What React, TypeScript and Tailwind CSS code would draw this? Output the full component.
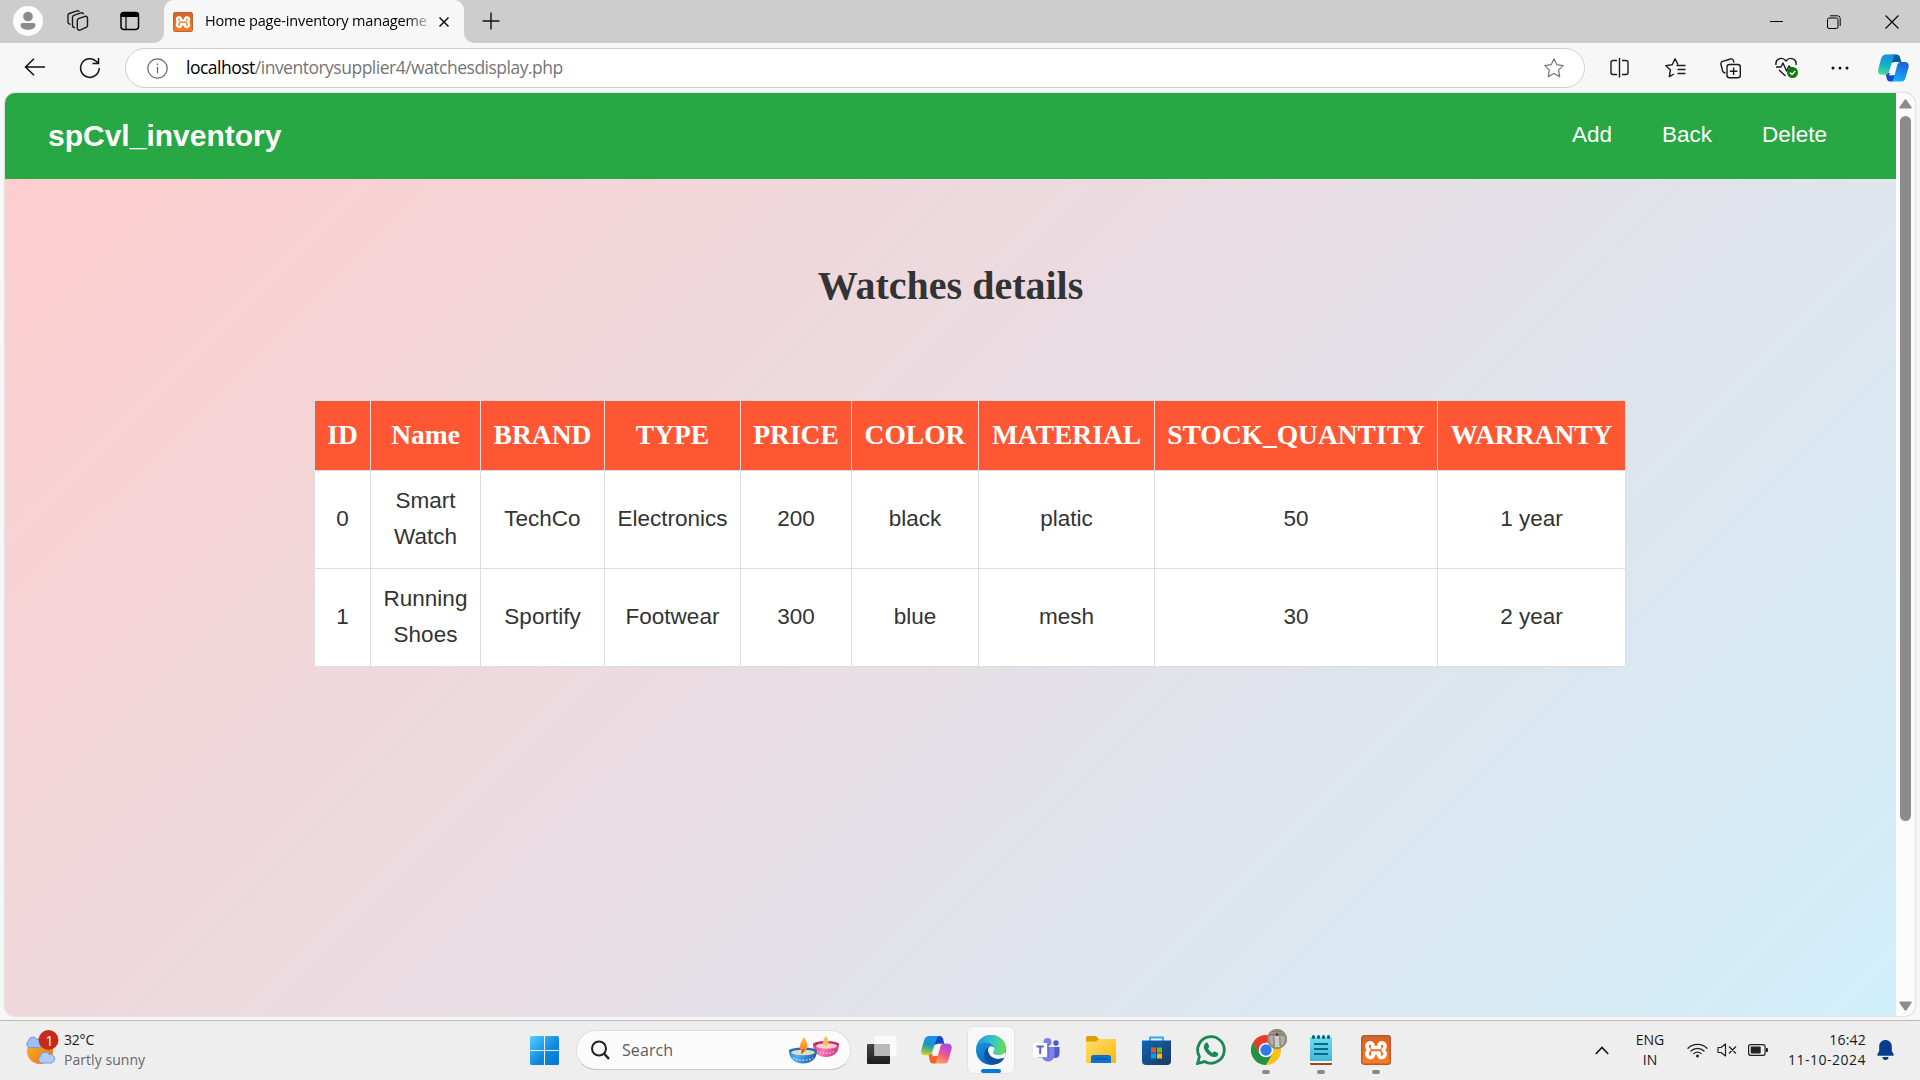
import React from "react";

function Person() {
  return (
    <svg width="30" height="30" viewBox="0 0 30 30">
      <circle cx="15" cy="15" r="15" fill="#fcfcfc" />
      <circle cx="15" cy="10.500" r="4.800" fill="#8b8b8b" />
      <path d="M9.500 17h11a2 2 0 0 1 2 2c0 3.200-3.500 4.800-7.500 4.800S7.500 22.200 7.500 19a2 2 0 0 1 2-2Z" fill="#8b8b8b" />
    </svg>
  );
}

function Workspaces() {
  return (
    <svg width="22" height="22" viewBox="0 0 22 22" fill="none" stroke="#1a1a1a" strokeWidth="1.400" strokeLinejoin="round" strokeLinecap="round">
      <path d="M11.500 8.700 18 6.300a2 2 0 0 1 2.500 1.900v7.300a2 2 0 0 1-1.300 1.900l-6.200 2.700a2 2 0 0 1-2.700-1.800V10.500a2 2 0 0 1 1.200-1.800Z" />
      <path d="M7.500 17.500a2 2 0 0 1-2-2V7.300a2 2 0 0 1 1.300-1.900l7.200-2.500a2 2 0 0 1 2.300.8" />
      <path d="M3 14.200a2 2 0 0 1-2-2V5.300A2 2 0 0 1 2.300 3.500L10 .9a2 2 0 0 1 2 .4" />
    </svg>
  );
}

function TabActions() {
  return (
    <svg width="20" height="20" viewBox="0 0 20 20">
      <rect x="1" y="1.500" width="17.500" height="17" rx="3" fill="none" stroke="#000" strokeWidth="1.500" />
      <path d="M.5 6V4a3 3 0 0 1 3-3h12.500a3 3 0 0 1 3 3v2Z" fill="#000" />
      <path d="M6 6v12" stroke="#000" strokeWidth="1.200" />
    </svg>
  );
}

function Xampp({ size }: { size: number }) {
  return (
    <svg width={size} height={size} viewBox="0 0 30 30">
      <defs>
        <linearGradient id="xg" x1="0" y1="0" x2="0" y2="1">
          <stop offset="0" stopColor="#c96a3b" />
          <stop offset="0.2" stopColor="#e5641a" />
          <stop offset="1" stopColor="#fb7d25" />
        </linearGradient>
      </defs>
      <rect x="0.700" y="0.700" width="28.600" height="28.600" rx="2.500" fill="url(#xg)" stroke="#b9592b" strokeWidth="1.400" />
      <path d="M11.500 12.500 11.800 9.500C10 6.800 6 7.800 6 11c0 2 .8 3 2 4-1.800 1.200-2.200 3-2 4.500.5 3.500 5 4 6.300 1l-.5-2.500h6.400l-.5 2.500c1.300 3 5.800 2.500 6.300-1 .2-1.500-.2-3.300-2-4.500 1.200-1 2-2 2-4 0-3.200-4-4.200-5.800-1.500l.3 3Z" fill="none" stroke="#fff" strokeWidth="3.600" strokeLinecap="round" strokeLinejoin="round" />
    </svg>
  );
}

function CopilotEdge() {
  return (
    <svg width="31" height="28" viewBox="0 0 31 28">
      <defs>
        <linearGradient id="ce1" x1="0.400" y1="0" x2="0.200" y2="1"><stop stopColor="#1a8fe0" /><stop offset="0.500" stopColor="#12b0c8" /><stop offset="1" stopColor="#56dc8c" /></linearGradient>
        <linearGradient id="ce2" x1="0.500" y1="0" x2="0.200" y2="1"><stop stopColor="#1b62d8" /><stop offset="1" stopColor="#17b4fb" /></linearGradient>
      </defs>
      <path d="M13 .5h5.500c2 0 3 1 3.600 3l1.400 5H12.500Z" fill="#0a5b9c" />
      <path d="M7.500 19H17.500l-2 8.500H12c-2 0-2.700-1-3.300-3.200Z" fill="#1745cf" />
      <path d="M17 8h5.500l-2 4-3 9-6.500.500 3.600-10.500c.5-2 1.200-3 2.400-3Z" fill="#f4fbff" />
      <path d="M8 .5h10.500c-2 0-2.700 2-3.400 4.500l-3.800 12c-.7 2.500-2 3.700-4 3.700H3.500C.5 20.700-.5 18 .3 15L3 5C3.700 2 5.700.5 8 .5Z" fill="url(#ce1)" />
      <path d="M22.500 8H27c3 0 4.200 2.500 3.500 5.500L27.500 24c-.8 2.500-2 3.500-4 3.500H12.500c2 0 2.700-1.500 3.400-4L19.300 11c.6-2 1.500-3 3.200-3Z" fill="url(#ce2)" />
    </svg>
  );
}

function CopilotColor() {
  return (
    <svg width="31" height="28" viewBox="0 0 31 28">
      <defs>
        <linearGradient id="cc1" x1="0.300" y1="0" x2="0.100" y2="1"><stop stopColor="#1892f2" /><stop offset="0.400" stopColor="#1b95c4" /><stop offset="0.750" stopColor="#74c150" /><stop offset="1" stopColor="#ecd52c" /></linearGradient>
        <linearGradient id="cc2" x1="0.700" y1="0" x2="0.200" y2="1"><stop stopColor="#a548e8" /><stop offset="0.500" stopColor="#f0588e" /><stop offset="1" stopColor="#ffad55" /></linearGradient>
      </defs>
      <path d="M13 0h5.500c2 0 3 1 3.600 3l1.400 5.500H12.500Z" fill="#1b45c5" />
      <path d="M7.500 18H17.500l-2 9.500H12c-2 0-2.700-1-3.300-3.200Z" fill="#f8632c" />
      <path d="M17 7.700h5.500l-2 4-3 8-6.500.500 3.600-9.500c.5-2 1.200-3 2.400-3Z" fill="#fbf6f8" />
      <path d="M8 0h10.500c-2 0-2.700 2-3.400 4.500l-3.800 11c-.7 2.500-2 3.800-4 3.800H3.500C.5 19.300-.5 17 .3 14L3 4.500C3.700 1.500 5.700 0 8 0Z" fill="url(#cc1)" />
      <path d="M22.500 7.700H27c3 0 4.200 2.500 3.500 5.500L27.500 24c-.8 2.500-2 3.500-4 3.500H12.500c2 0 2.700-1.500 3.400-4L19.300 10.700c.6-2 1.500-3 3.200-3Z" fill="url(#cc2)" />
    </svg>
  );
}

function Edge() {
  return (
    <svg width="30" height="30" viewBox="0 0 30 30">
      <defs>
        <linearGradient id="eg1" x1="0" y1="0.300" x2="1" y2="0.500"><stop stopColor="#2097dc" /><stop offset="0.500" stopColor="#35c3d0" /><stop offset="1" stopColor="#67e04c" /></linearGradient>
        <linearGradient id="eg2" x1="0" y1="0" x2="0.400" y2="1"><stop stopColor="#1b9de2" /><stop offset="1" stopColor="#0869c8" /></linearGradient>
      </defs>
      <circle cx="15" cy="15" r="15" fill="url(#eg2)" />
      <path d="M.3 12C1.500 4.500 8 0 15 0c9 0 15 6.500 15 13 0 4.500-3.500 7-7.500 7-3.500 0-5.500-1.200-5.500-2.300 0-.8 1.500-1.300 1.500-3.700 0-3.500-4-6.500-9-6.500C5 7.500 1.800 9.500.3 12Z" fill="url(#eg1)" />
      <path d="M12.500 12C9 14 8 17.500 8 20c0 5 4 9.500 9 9.800 5-.3 9-3.300 10.800-6.300.2-.6-.2-.9-.8-.6-7 3.500-15-.5-15-7.200 0-1.500.3-2.700.5-3.700Z" fill="#12519b" />
      <path d="M18.500 13.700c0 2.400-1.500 3.200-1.500 4 0 1.100 2 2.300 5.500 2.300 2.700 0 5-1 7-3.200 .3 2.500-.8 4.700-1.700 6.200-6.800 3.200-15.300-.8-15.800-6.700-.2-3 1-4.800 3-5 2-.1 3.500 1 3.500 2.400Z" fill="#f8f8f8" />
      <path d="M12.300 16.500c.8 5.500 7.200 8.500 13 7 1.300-.4 2.300-.8 2.700-.5.4.5-1.500 3.200-4.500 4.900C14 30 9 22 12.300 16.500Z" fill="#12519b" />
    </svg>
  );
}

function Teams() {
  return (
    <svg width="27" height="24" viewBox="0 0 27 24">
      <circle cx="14.500" cy="4" r="4" fill="#7b83eb" />
      <circle cx="23" cy="5" r="2.700" fill="#5059c9" />
      <path d="M16 9h10.500v6.500c0 3-2 4.500-4.500 4.500s-4-2-4-4Z" fill="#5059c9" />
      <path d="M8 9h13.500v8c0 4-3 6.500-6.500 6.500S9 21 8 17Z" fill="#7b83eb" />
      <path d="M14 5.500h1.500v14H5l-1-1h10Z" fill="#4b53bc" />
      <rect y="5" width="14.300" height="14.300" fill="#fff" />
      <path d="M3.500 8.500h7.300M7.200 8.500V16" stroke="#5a62c3" strokeWidth="2" />
    </svg>
  );
}

function Folder() {
  return (
    <svg width="30" height="28" viewBox="0 0 30 28">
      <defs><linearGradient id="fg" x1="0" y1="0" x2="1" y2="1"><stop stopColor="#ffdf70" /><stop offset="1" stopColor="#fbb80e" /></linearGradient></defs>
      <path d="M0 1.500A1.500 1.500 0 0 1 1.500 0H10l3 3h17v4H0Z" fill="#dc9f08" />
      <path d="M0 5.500h10l3.500-2.500h15A1.500 1.500 0 0 1 30 4.500V27H1.500A1.500 1.500 0 0 1 0 25.500Z" fill="url(#fg)" />
      <path d="M5 27v-5.500a2.500 2.500 0 0 1 2.500-2.500h15a2.500 2.500 0 0 1 2.500 2.500V27Z" fill="#0d72cf" />
      <path d="M9 23h12" stroke="#0a4d93" strokeWidth="1.200" strokeLinecap="round" />
    </svg>
  );
}

function Store() {
  return (
    <svg width="29" height="29" viewBox="0 0 29 29">
      <defs><linearGradient id="sg" x1="0" y1="0" x2="1" y2="1"><stop stopColor="#0967b8" /><stop offset="1" stopColor="#21375e" /></linearGradient></defs>
      <path d="M8 5V1.500h13V5" fill="none" stroke="#22b0ee" strokeWidth="1.800" />
      <path d="M0 4.500h29V25a4 4 0 0 1-4 4H4a4 4 0 0 1-4-4Z" fill="url(#sg)" />
      <rect x="9" y="11.500" width="5" height="5" fill="#f25022" />
      <rect x="15" y="11.500" width="5" height="5" fill="#7fba00" />
      <rect x="9" y="17.500" width="5" height="5" fill="#00a4ef" />
      <rect x="15" y="17.500" width="5" height="5" fill="#ffb900" />
    </svg>
  );
}

function WhatsApp() {
  return (
    <svg width="30" height="30" viewBox="0 0 30 30">
      <path d="M1.600 28.400 3.400 21.500A13.300 13.300 0 1 1 8.600 26.600Z" fill="none" stroke="#1a8754" strokeWidth="2.800" />
      <path d="M9.700 8c.6-.6 1.800-.5 2.200.3l1.300 3c.2.600-.2 1.200-1.100 2.300 1 2 2.400 3.400 4.500 4.300 1.200-1.300 1.500-1.700 2.200-1.400l3 1.500c.6.300.5 1 .2 2-.5 1.400-2.300 2.200-3.800 2.100C12.500 21.500 8 15.500 7.800 12c0-1.700.8-3.200 1.900-4Z" fill="#1a8754" />
    </svg>
  );
}

function Chrome() {
  return (
    <svg width="37" height="37" viewBox="0 0 37 37">
      <circle cx="15" cy="21" r="15" fill="#fbc116" />
      <path d="M2 13.500A15 15 0 0 1 28 13.500H15L8.500 25Z" fill="#e33b2e" />
      <path d="M2 13.500A15 15 0 0 0 15 36l6.500-11.300L8.500 24.700Z" fill="#229342" />
      <circle cx="15" cy="21" r="7.300" fill="#fff" />
      <circle cx="15" cy="21" r="5.700" fill="#327bec" />
      <circle cx="26" cy="10" r="10" fill="#9b948b" />
      <path d="M19 5.500h14M21 2.500h10" stroke="#857c70" strokeWidth="1.200" />
      <path d="M18.500 8l3-1 1 9-2.500-1Zm11-1 4 1-1 7-3 1Z" fill="#b9b2a7" />
      <path d="M23.500 7h4.500l1 11h-5Z" fill="#cfcbcb" />
      <circle cx="26" cy="5.500" r="1.600" fill="#5b4a3c" />
      <path d="M23 10v7M29 9v8" stroke="#85817a" strokeWidth="1" />
      <circle cx="26" cy="10" r="9.500" fill="none" stroke="#8a8379" strokeWidth="1" />
    </svg>
  );
}

function Notepad() {
  return (
    <svg width="22" height="30" viewBox="0 0 22 30">
      <defs><linearGradient id="ng" x1="0" y1="0" x2="0" y2="1"><stop stopColor="#6fdcee" /><stop offset="1" stopColor="#42b6d6" /></linearGradient></defs>
      <rect y="26" width="22" height="4" rx="1" fill="#a1480c" />
      <rect y="25" width="22" height="3" fill="#f4f2f1" />
      <rect y="2" width="22" height="24" rx="1" fill="url(#ng)" />
      <path d="M4 9h14M4 14h14M4 19h14" stroke="#08678a" strokeWidth="1.800" />
      <path d="M3.500 1.500v1M8.500 1.500v1M13.500 1.500v1M18.500 1.500v1" stroke="#0b5f7d" strokeWidth="3" strokeLinecap="round" />
    </svg>
  );
}

function Diyas() {
  return (
    <svg width="50" height="28" viewBox="0 0 50 28">
      <defs>
        <linearGradient id="db" x1="0" y1="0" x2="1" y2="0.300"><stop stopColor="#2a80c8" /><stop offset="0.400" stopColor="#4fb0f2" /><stop offset="1" stopColor="#1f62a5" /></linearGradient>
        <linearGradient id="dp" x1="0" y1="0" x2="1" y2="0.300"><stop stopColor="#d83a84" /><stop offset="0.500" stopColor="#ff7ab6" /><stop offset="1" stopColor="#d03784" /></linearGradient>
        <linearGradient id="df" x1="0" y1="0" x2="0" y2="1"><stop stopColor="#ffc24a" /><stop offset="1" stopColor="#f4781c" /></linearGradient>
      </defs>
      <path d="M24 8c0 8 5 13 13 13s13-5 13-13Z" fill="url(#dp)" />
      <ellipse cx="37" cy="8" rx="13" ry="3" fill="#c92573" />
      <ellipse cx="37.500" cy="10" rx="10.500" ry="2.800" fill="#f5d3c6" />
      <path d="M36.500 0c4 4 4 7 1 10-5-1.500-4-5.500-1-10Z" fill="#f8bd55" />
      <path d="M27.500 15c5 3 15 3 19 0" fill="none" stroke="#ffd0e6" strokeWidth="1.200" strokeDasharray="1.500 1.800" />
      <path d="M0 14.500c0 7.500 5 13 14 13s14-5.500 14-13Z" fill="url(#db)" />
      <ellipse cx="14" cy="14.500" rx="14" ry="3" fill="#1f6fb0" />
      <ellipse cx="14" cy="16.500" rx="12" ry="2.800" fill="#e3ddc0" />
      <path d="M15 1c4 6 5 11 0 15.500-6-3-5-8 0-15.500Z" fill="url(#df)" />
      <path d="M14.500 13.500 12.500 17.500" stroke="#9a4218" strokeWidth="1.300" />
      <path d="M4 22c5 3 15 3 20 0" fill="none" stroke="#bfe3ff" strokeWidth="1.300" strokeDasharray="1.500 1.800" />
    </svg>
  );
}

function TabStrip() {
  return (
    <div className="flex h-[43px] shrink-0 items-stretch bg-[#cdcdcd]">
      <div className="flex w-[164px] items-center pb-px">
        <div className="ml-[13px]"><Person /></div>
        <div className="ml-[24px]"><Workspaces /></div>
        <div className="ml-[31px]"><TabActions /></div>
      </div>
      <div className="relative flex w-[300px] items-center rounded-t-[10px] bg-[#f7f7f7] pl-[9px]">
        <svg className="absolute bottom-0 -left-[10px]" width="10" height="10"><path d="M10 0v10H0A10 10 0 0 0 10 0Z" fill="#f7f7f7" /></svg>
        <svg className="absolute -right-[10px] bottom-0" width="10" height="10"><path d="M0 0v10h10A10 10 0 0 1 0 0Z" fill="#f7f7f7" /></svg>
        <Xampp size={20} />
        <span className="mb-[2px] ml-[12px] w-[224px] overflow-hidden bg-linear-to-r from-black from-90% to-black/20 bg-clip-text text-[14.5px] tracking-[-0.15px] whitespace-nowrap text-transparent">Home page-inventory manageme</span>
        <svg className="ml-[9px]" width="12" height="12"><path d="M1.500 1.500l9 9M10.500 1.500l-9 9" stroke="#111" strokeWidth="1.500" /></svg>
      </div>
      <div className="flex items-center pb-[2px] pl-[18px]">
        <svg width="18" height="18"><path d="M9 .5v17M.5 9h17" stroke="#111" strokeWidth="1.400" /></svg>
      </div>
      <div className="ml-auto flex items-center gap-[44px] pr-[21px]">
        <svg width="13" height="13"><path d="M0 6.500h13" stroke="#000" /></svg>
        <svg width="14" height="14" fill="none" stroke="#000"><rect x=".5" y="3" width="10.500" height="10.500" rx="1.500" /><path d="M3 .8h7.500a2.700 2.700 0 0 1 2.700 2.700V11" /></svg>
        <svg width="14" height="14"><path d="M.5.5l13 13M13.500.5l-13 13" stroke="#000" strokeWidth="1.100" /></svg>
      </div>
    </div>
  );
}

function Toolbar() {
  return (
    <div className="flex h-[50px] shrink-0 items-center bg-[#f7f7f7]">
      <svg className="mb-[2px] ml-[24px]" width="21" height="18" fill="none" stroke="#111" strokeWidth="1.500"><path d="M21 9H1.500M10 .7 1.500 9l8.500 8.300" /></svg>
      <svg className="ml-[34px]" width="22" height="22" fill="none" stroke="#111" strokeWidth="1.500"><path d="M20.200 11A9.300 9.300 0 1 1 17.500 4.500L19.500 6.500M19.500 1v5.500h-6" /></svg>
      <div className="ml-[24px] flex h-10 w-[1460px] items-center rounded-full border border-[#cfcfcf] bg-white">
        <svg className="ml-[21px]" width="21" height="21" fill="none" stroke="#666" strokeWidth="1.200"><circle cx="10.500" cy="10.500" r="9.700" /><path d="M10.500 9v6.500M10.500 5.500v1.700" /></svg>
        <span className="mb-[2px] ml-[18px] text-[17.500px] tracking-[-0.5px] whitespace-nowrap text-[#757575]"><span className="text-black">localhost</span>/inventorysupplier4/watchesdisplay.php</span>
        <svg className="mr-[20px] ml-auto" width="20" height="20" viewBox="0 0 20 20" fill="none" stroke="#777" strokeWidth="1.200" strokeLinejoin="round"><path d="m10 .8 2.800 5.900 6.400.9-4.600 4.500 1.100 6.500L10 15.500l-5.700 3.100 1.100-6.500L.8 7.600l6.400-.9Z" /></svg>
      </div>
      <div className="flex flex-1 items-center pl-[25px] text-[#1a1a1a]">
        <svg width="19" height="20" viewBox="0 0 19 20" fill="none" stroke="currentColor" strokeWidth="1.400"><path d="M7 2.500H3a2 2 0 0 0-2 2v10a2 2 0 0 0 2 2h4M9.500 0v19.500M12 2.500h4a2 2 0 0 1 2 2v10a2 2 0 0 1-2 2h-4" /></svg>
        <svg className="ml-[36px]" width="21" height="20" viewBox="0 0 21 20" fill="none" stroke="currentColor" strokeWidth="1.400" strokeLinejoin="round"><path d="M13 6.500 10 .8 7.200 6.700l-6.400.9 4.600 4.500-1.100 6.500L9 16M11.500 7.500H20.500M12.500 11.500h8M12.500 15.500h8" /></svg>
        <svg className="ml-[34px]" width="22" height="21" viewBox="0 0 22 21" fill="none" stroke="currentColor" strokeWidth="1.400"><path d="M5.500 15C3.500 15 3 14 2.500 12.500L1 6.500A2.500 2.500 0 0 1 2.800 3.300L10.500 1a2.500 2.500 0 0 1 3 1.800l.5 1.700" /><rect x="7" y="6.500" width="13.300" height="13.300" rx="2.500" /><path d="M13.600 9.500v7.500M9.800 13.200h7.600" /></svg>
        <svg className="ml-[33px]" width="24" height="22" viewBox="0 0 24 22" fill="none" stroke="currentColor" strokeWidth="1.400" strokeLinejoin="round"><path d="M1 8c-1-6 6-9 10-4 4-5 11-2 10 4M1 10h5l2-4 3.500 8 2.500-5 1.500 2h3M4 13l6.500 6" /><circle cx="17.500" cy="15.500" r="5.500" fill="#0f7b0f" stroke="none" /><path d="m15 15.500 2 2 3.300-3.500" stroke="#fff" /></svg>
        <svg className="ml-[32px]" width="18" height="4" fill="#111"><circle cx="2" cy="2" r="1.500" /><circle cx="9" cy="2" r="1.500" /><circle cx="16" cy="2" r="1.500" /></svg>
        <div className="ml-[29px]"><CopilotEdge /></div>
      </div>
    </div>
  );
}

const columns = ["ID", "Name", "BRAND", "TYPE", "PRICE", "COLOR", "MATERIAL", "STOCK_QUANTITY", "WARRANTY"];
const colWidths = [56, 110, 124, 136, 111, 127, 176, 283, 188];
const rows = [
  ["0", "Smart Watch", "TechCo", "Electronics", "200", "black", "platic", "50", "1 year"],
  ["1", "Running Shoes", "Sportify", "Footwear", "300", "blue", "mesh", "30", "2 year"],
];

function Page() {
  return (
    <div className="flex h-[923px] w-[1910px] shrink-0 self-center overflow-hidden rounded-[10px] bg-[#fcfcfc] shadow-[0_0_2px_rgba(0,0,0,0.3)]">
      <div className="flex w-[1891px] flex-col bg-[linear-gradient(135deg,#ffcccc,#ccf2ff)] bg-[length:100%_1165px] bg-no-repeat font-['Liberation_Sans',sans-serif] text-[22.500px] text-[#333]">
        <header className="flex h-[86px] shrink-0 items-center justify-between bg-[#28a745] pr-[69px] pb-[2px] pl-[43px] text-white">
          <div className="text-[30px] font-bold">spCvl_inventory</div>
          <nav className="flex gap-[50px]"><a>Add</a><a>Back</a><a>Delete</a></nav>
        </header>
        <h1 className="mt-[75px] text-center font-['Liberation_Serif',serif] text-[40px] leading-[64px] font-bold">Watches details</h1>
        <table className="mt-[82px] ml-[309px] w-[1312px] table-fixed border-collapse bg-white text-center">
          <colgroup>{colWidths.map((w, i) => <col key={i} style={{ width: w }} />)}</colgroup>
          <thead>
            <tr className="h-[70px] bg-[#ff5733] font-['Liberation_Serif',serif] text-[27.500px] text-white">
              {columns.map((c) => <th key={c} className="border border-[#ddd] pb-[2px] font-bold whitespace-nowrap"><div className="-mx-2">{c}</div></th>)}
            </tr>
          </thead>
          <tbody>
            {rows.map((r) => (
              <tr key={r[0]} className="h-[98px]">
                {r.map((v, i) => <td key={i} className="border border-[#ddd] px-3 pb-[2px] leading-[36px]">{v}</td>)}
              </tr>
            ))}
          </tbody>
        </table>
      </div>
      <div className="flex flex-1 flex-col items-center pt-[6px] pb-[5px]">
        <svg width="13" height="10"><path d="M5.500 1a1.200 1.200 0 0 1 2 0l5 7c.4.800 0 1.500-.8 1.500H1.300C.5 9.500.1 8.800.5 8Z" fill="#8b8b8b" /></svg>
        <div className="mt-[7px] h-[705px] w-[11px] rounded-full bg-[#8b8b8b]" />
        <svg className="mt-auto" width="13" height="10"><path d="M5.500 9a1.200 1.200 0 0 0 2 0l5-7C12.900 1.200 12.500.5 11.700.5H1.300C.5.500.1 1.200.5 2Z" fill="#8b8b8b" /></svg>
      </div>
    </div>
  );
}

function TaskIcon({ children, running, active }: { children: React.ReactNode; running?: boolean; active?: boolean }) {
  return (
    <div className={active ? "relative flex h-12 w-12 items-center justify-center rounded-md border border-[#e3e3e3] bg-[#f8f8f8]" : "relative flex h-12 w-12 items-center justify-center"}>
      {children}
      {active && <div className="absolute bottom-0 h-1 w-5 rounded-full bg-[#0078d7]" />}
      {running && <div className="absolute bottom-0 h-1 w-2 rounded-full bg-[#888]" />}
    </div>
  );
}

function Taskbar() {
  return (
    <div className="flex h-[60px] shrink-0 items-center border-t border-[#bcbcbc] bg-[#eeeeee] pb-px text-[#1a1a1a]">
      <div className="flex w-[503px] items-center">
        <svg className="mb-[4px] ml-[25px]" width="34" height="36" viewBox="0 0 34 36">
          <defs><linearGradient id="sun" x1="0" y1="0" x2="1" y2="1"><stop stopColor="#f5b62e" /><stop offset="1" stopColor="#f0700f" /></linearGradient></defs>
          <circle cx="15" cy="21" r="13" fill="url(#sun)" />
          <path d="M4 17.500A3.600 3.600 0 0 1 3.500 11 4.500 4.500 0 0 1 12 9.500a4 4 0 0 1 5 4c0 2.500-1.500 4-4 4Z" fill="#9ebff4" stroke="#769bdd" />
          <path d="M16 33a3.500 3.500 0 0 1-.5-6.500 4.500 4.500 0 0 1 8.500-2 4 4 0 0 1 2.500 8.500Z" fill="#aecbfa" stroke="#769bdd" />
          <circle cx="23.500" cy="10" r="10" fill="#c42b1c" />
          <text x="20.500" y="15.500" fontSize="14" fill="#fff">1</text>
        </svg>
        <div className="ml-[5px] text-[14px] leading-[20px]"><div className="tracking-[-0.2px]">32°C</div><div className="tracking-[0.05px] text-[#666]">Partly sunny</div></div>
      </div>
      <div className="flex items-center">
        <svg className="ml-[27px]" width="29" height="29"><defs><linearGradient id="wg" x1="0" y1="0" x2="1" y2="1"><stop stopColor="#4dd0ff" /><stop offset=".6" stopColor="#0d86dd" /><stop offset="1" stopColor="#0078d4" /></linearGradient></defs><path d="M1.500 0H14v14H0V1.500A1.500 1.500 0 0 1 1.500 0ZM15 0h12.500A1.500 1.500 0 0 1 29 1.500V14H15ZM0 15h14v14H1.500A1.500 1.500 0 0 1 0 27.500ZM15 15h14v12.500a1.500 1.500 0 0 1-1.500 1.500H15Z" fill="url(#wg)" /></svg>
        <div className="ml-[17px] flex h-[40px] w-[275px] items-center rounded-full border border-[#dedede] border-b-[#c4c4c4] bg-[#fbfbfb] pr-[11px] pl-[14px]">
          <svg width="19" height="20" fill="none" stroke="#222" strokeWidth="2"><circle cx="8" cy="8.500" r="7" /><path d="m13 13.500 5 5.500" strokeWidth="2.500" /></svg>
          <span className="ml-[12px] text-[16px] tracking-[0.1px] text-[#5c5c5c]">Search</span>
          <div className="ml-auto"><Diyas /></div>
        </div>
        <div className="ml-[6px] flex gap-[7px]">
          <TaskIcon><svg className="ml-px" width="30" height="28"><defs><linearGradient id="tv" x1="0" y1="0" x2="0" y2="1"><stop stopColor="#474747" /><stop offset="1" stopColor="#1c1c1c" /></linearGradient></defs><rect y="8" width="23" height="20" rx="1" fill="url(#tv)" /><rect x="7.500" width="22" height="20" rx="1" fill="#fafafa" /><rect x="7.500" y="8" width="15.500" height="12" fill="#b9b9b9" /></svg></TaskIcon>
          <TaskIcon><CopilotColor /></TaskIcon>
          <TaskIcon active><Edge /></TaskIcon>
          <TaskIcon><Teams /></TaskIcon>
          <TaskIcon><Folder /></TaskIcon>
          <TaskIcon><Store /></TaskIcon>
          <TaskIcon><WhatsApp /></TaskIcon>
          <TaskIcon running><div className="mb-[6px] ml-[6px] shrink-0"><Chrome /></div></TaskIcon>
          <TaskIcon running><Notepad /></TaskIcon>
          <TaskIcon running><Xampp size={30} /></TaskIcon>
        </div>
      </div>
      <div className="ml-auto flex items-center pr-[26px]">
        <svg width="14" height="9" fill="none" stroke="#111" strokeWidth="1.600"><path d="m.8 8 6.200-6.500L13.200 8" /></svg>
        <div className="ml-[26px] w-[30px] text-center text-[14px] leading-[20px]"><div>ENG</div><div>IN</div></div>
        <svg className="ml-[22px]" width="21" height="16" viewBox="0 0 21 16" fill="none" stroke="#222" strokeWidth="1.300" strokeLinecap="round"><path d="M1 6.200a13.500 13.500 0 0 1 19 0M4 9a9.200 9.200 0 0 1 13 0M6.800 11.600a5.300 5.300 0 0 1 7.400 0" /><circle cx="10.500" cy="14" r="1.500" fill="#222" stroke="none" /></svg>
        <svg className="ml-[9px]" width="20" height="14" viewBox="0 0 20 14" fill="none" stroke="#222" strokeWidth="1.200" strokeLinejoin="round"><path d="M1 4.500h3L8.500 1v12L4 9.500H1ZM12 3.500l7 7M19 3.500l-7 7" /></svg>
        <svg className="ml-[11px]" width="20" height="12" viewBox="0 0 20 12"><rect x=".6" y=".6" width="16.500" height="10.800" rx="2.200" fill="none" stroke="#222" strokeWidth="1.200" /><rect x="2.700" y="2.500" width="10" height="7" rx="1" fill="#222" /><path d="M18 4h1a1 1 0 0 1 1 1v2a1 1 0 0 1-1 1h-1Z" fill="#222" /></svg>
        <div className="ml-[20px] w-[78px] text-right text-[14px] leading-[20px] whitespace-nowrap"><div className="tracking-[0.2px]">16:42</div><div className="-ml-3 tracking-[0.500px]">11-10-2024</div></div>
        <svg className="ml-[11px]" width="17" height="20" viewBox="0 0 17 20" fill="#053e8f"><path d="M8.500 0A6 6 0 0 0 2.200 6v5L.3 14.500c-.3.800 0 1.300.8 1.300h14.800c.8 0 1.100-.500.8-1.300L14.800 11V6A6 6 0 0 0 8.500 0ZM5.500 17h6a3 3 0 0 1-6 0Z" /></svg>
      </div>
    </div>
  );
}

export default function App() {
  return (
    <div className="flex h-screen w-full flex-col overflow-hidden bg-[#f7f7f7] font-['Open_Sans','Noto_Sans',sans-serif]">
      <TabStrip />
      <Toolbar />
      <Page />
      <div className="h-1 shrink-0" />
      <Taskbar />
    </div>
  );
}
